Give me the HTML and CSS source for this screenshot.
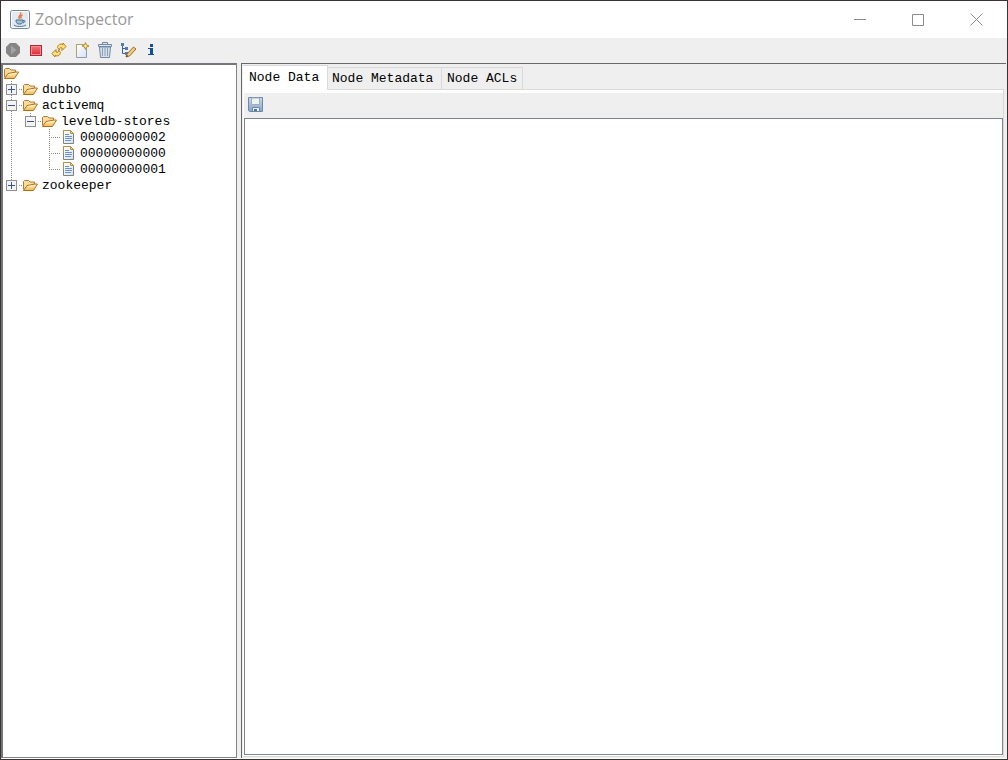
FILE: index.html
```html
<!DOCTYPE html>
<html lang="en">
<head>
<meta charset="utf-8">
<title>ZooInspector</title>
<link rel="stylesheet" href="styles.css">
</head>
<body>
<svg class="defs" aria-hidden="true">
  <defs>
    <linearGradient id="gold" x1="0" y1="0" x2="0" y2="1"><stop offset="0" stop-color="#fff0bd"/><stop offset="1" stop-color="#f1b858"/></linearGradient>
    <linearGradient id="sheet" x1="0" y1="0" x2="1" y2="1"><stop offset="0" stop-color="#fff"/><stop offset="1" stop-color="#d5e2f5"/></linearGradient>
    <linearGradient id="metal" x1="0" y1="0" x2="0" y2="1"><stop offset="0" stop-color="#ccd8e6"/><stop offset="1" stop-color="#86a3cc"/></linearGradient>
    <linearGradient id="red" x1="0" y1="0" x2="0" y2="1"><stop offset="0" stop-color="#f27d80"/><stop offset="1" stop-color="#dc2230"/></linearGradient>
    <symbol id="folder" viewBox="0 0 17 16">
      <path d="M1.500 12.500v-8l1-1h4l1.500 1.500h4.500v2.500" fill="#f9dda0" stroke="#b07a35"/>
      <path d="M1.500 13.500L5 8.500l8-1.500h2.500L11.500 13.500z" fill="url(#gold)" stroke="#b07020"/>
      <path d="M6 9.500l7.500-1" stroke="#fff4c8" fill="none"/>
    </symbol>
    <symbol id="file" viewBox="0 0 17 16">
      <path d="M3.500 1.500h7l3 3v10h-10z" fill="url(#sheet)" stroke="#7f8577"/>
      <path d="M3.500 8V1.500h7l3 3" fill="none" stroke="#b8923c"/>
      <path d="M10.500 1.500v3h3z" fill="#e8c883" stroke="#b8923c"/>
      <path d="M5 5.500h4M5 7.500h7M5 9.500h7M5 11.500h6" stroke="#6f90ca"/>
    </symbol>
    <symbol id="box" viewBox="0 0 19 16">
      <path d="M16 8.500h3" stroke="#888" stroke-dasharray="1 1"/>
      <rect x="3.500" y="3.500" width="10" height="10" fill="#f4f4f4" stroke="#919191"/>
      <path d="M5 8.500h7" stroke="#35539b"/>
    </symbol>
  </defs>
</svg>

<div class="window">
  <header class="titlebar">
    <svg class="app-icon" viewBox="0 0 20 20" aria-hidden="true">
      <rect x=".5" y=".5" width="19" height="18" rx="2" fill="#e3e9ef" stroke="#758596"/>
      <rect x="1.500" y="1.500" width="17" height="16" rx="1" fill="none" stroke="#fff"/>
      <path d="M10.500 2.500c2 2-3.500 3.500-1 6.500M12.500 5c-2.500 1-2 2-1 3.500" fill="none" stroke="#e17a45" stroke-width="1.500"/>
      <path d="M6 10h7c0 2-.5 3.500-2 4H8c-1.500-.5-2-2-2-4zM13 10.500c3-.5 2 2 0 2.500" fill="#a5bed4" stroke="#46739b"/>
      <path d="M4 15c2 2 9 2 12 0" fill="none" stroke="#46739b"/>
    </svg>
    <h1 class="title">ZooInspector</h1>
    <div class="controls">
      <button class="control" aria-label="Minimize"><svg viewBox="0 0 13 13"><path d="M0 6.500h12"/></svg></button>
      <button class="control" aria-label="Maximize"><svg viewBox="0 0 13 13"><path d="M.5 1.500h11v11H.5z"/></svg></button>
      <button class="control" aria-label="Close"><svg viewBox="0 0 13 13"><path d="M.5 .5l12 12M12.500 .5l-12 12"/></svg></button>
    </div>
  </header>

  <div class="toolbar" role="toolbar" aria-label="Main">
    <button class="tool" aria-label="Connect"><svg viewBox="0 0 16 16"><path d="M5 1h6l4 4v6l-4 4H5l-4-4V5z" fill="#858585"/><path d="M6 3.500v9l5.500-4.500z" fill="#a3a3a3"/></svg></button>
    <button class="tool" aria-label="Disconnect"><svg viewBox="0 0 16 16"><rect x="2.500" y="3.500" width="11" height="10" fill="url(#red)" stroke="#ad2a35"/><rect x="3.500" y="4.500" width="9" height="8" fill="none" stroke="#f08a8e"/></svg></button>
    <button class="tool" aria-label="Refresh"><svg viewBox="0 0 16 16"><path d="M6.500 5.500C7 2.500 9 1.500 12 2.500V1l3 3.500-4 4V6C9 5 8.500 6 8.500 8zM9.500 10.500C9 13.500 7 14.500 4 13.500V15l-3-3.500 4-4V10c2 1 2.500 0 2.500-2z" fill="#ffe17e" stroke="#b77a18"/></svg></button>
    <button class="tool" aria-label="Add node"><svg viewBox="0 0 16 16"><path d="M2.500 2.500h7l3 4v9h-10z" fill="url(#sheet)" stroke="#8c9bb0"/><path d="M2.500 15V2.500H9" fill="none" stroke="#b3a16c"/><path d="M11.500 .5l1 2.500 2.500 1-2.500 1-1 2.500-1-2.500L8 4l2.500-1z" fill="#fff0a0" stroke="#b48c28"/></svg></button>
    <button class="tool" aria-label="Delete node"><svg viewBox="0 0 16 16"><path d="M5.500 2V.5h5V2M1.500 2.500h13v2h-13z" fill="#dfe7ef" stroke="#7189a2"/><path d="M2.500 5h11l-1 10.500h-9z" fill="#d6e0ea" stroke="#7189a2"/><path d="M5.500 6v8M8 6v8M10.500 6v8" stroke="#8aa0b6"/></svg></button>
    <button class="tool" aria-label="Edit node viewers"><svg viewBox="0 0 16 16"><path d="M2.500 3v8.500h4M2.500 6.500h4" fill="none" stroke="#405f91"/><path d="M1 1h3v3H1zM5 5h3v3H5zM5 10h3v3H5z" fill="#507ab4"/><path d="M6 15l1-3 6.500-7L16 7l-6.500 7z" fill="#f3cb7b" stroke="#996a32"/><path d="M6 15l1-2 1 1z" fill="#333"/></svg></button>
    <button class="tool" aria-label="About"><svg viewBox="0 0 16 16"><path d="M7 2h3v3H7zM5 6h5v6h1v1H5v-1h2V7H5z" fill="#104f94"/></svg></button>
  </div>

  <main class="split">
    <nav class="tree" aria-label="Nodes">
      <div class="row"><svg class="icon"><use href="#folder"/></svg></div>
      <div class="row">
        <button class="cell" aria-label="Expand dubbo"><svg viewBox="0 0 19 16"><path class="dots" d="M8.500 0v16"/><use href="#box"/><path class="plus" d="M8.500 5v7"/></svg></button>
        <svg class="icon"><use href="#folder"/></svg><span class="label">dubbo</span>
      </div>
      <div class="row">
        <button class="cell" aria-label="Collapse activemq"><svg viewBox="0 0 19 16"><path class="dots" d="M8.500 0v16"/><use href="#box"/></svg></button>
        <svg class="icon"><use href="#folder"/></svg><span class="label">activemq</span>
      </div>
      <div class="row">
        <svg class="cell" viewBox="0 0 19 16"><path class="dots" d="M8.500 0v16"/></svg>
        <button class="cell" aria-label="Collapse leveldb-stores"><svg viewBox="0 0 19 16"><path class="dots" d="M8.500 0v8"/><use href="#box"/></svg></button>
        <svg class="icon"><use href="#folder"/></svg><span class="label">leveldb-stores</span>
      </div>
      <div class="row">
        <svg class="cell" viewBox="0 0 19 16"><path class="dots" d="M8.500 0v16"/></svg>
        <svg class="cell"></svg>
        <svg class="cell" viewBox="0 0 19 16"><path class="dots" d="M8.500 0v16M8 8.500h11"/></svg>
        <svg class="icon"><use href="#file"/></svg><span class="label">00000000002</span>
      </div>
      <div class="row">
        <svg class="cell" viewBox="0 0 19 16"><path class="dots" d="M8.500 0v16"/></svg>
        <svg class="cell"></svg>
        <svg class="cell" viewBox="0 0 19 16"><path class="dots" d="M8.500 0v16M8 8.500h11"/></svg>
        <svg class="icon"><use href="#file"/></svg><span class="label">00000000000</span>
      </div>
      <div class="row">
        <svg class="cell" viewBox="0 0 19 16"><path class="dots" d="M8.500 0v16"/></svg>
        <svg class="cell"></svg>
        <svg class="cell" viewBox="0 0 19 16"><path class="dots" d="M8.500 0v8M8 8.500h11"/></svg>
        <svg class="icon"><use href="#file"/></svg><span class="label">00000000001</span>
      </div>
      <div class="row">
        <button class="cell" aria-label="Expand zookeeper"><svg viewBox="0 0 19 16"><path class="dots" d="M8.500 0v8"/><use href="#box"/><path class="plus" d="M8.500 5v7"/></svg></button>
        <svg class="icon"><use href="#folder"/></svg><span class="label">zookeeper</span>
      </div>
    </nav>

    <section class="details">
      <div class="tabs" role="tablist">
        <button class="tab tab-active" role="tab" aria-selected="true">Node Data</button>
        <button class="tab tab-meta" role="tab" aria-selected="false">Node Metadata</button>
        <button class="tab tab-acls" role="tab" aria-selected="false">Node ACLs</button>
        <span class="tab-rest"></span>
      </div>
      <div class="panel">
        <div class="panel-bar">
          <button class="tool" aria-label="Save"><svg viewBox="0 0 16 16"><path d="M.5 .5h14v14h-13l-1-1z" fill="url(#metal)" stroke="#6b89ad"/><path d="M3.500 1h8v6.500h-8z" fill="#f1f2e9" stroke="#9aafc4"/><path d="M4.500 14v-3.500h7V14" fill="#eef2f6" stroke="#6a88ac"/><path d="M6 12h3v2H6z" fill="#54779f"/></svg></button>
        </div>
        <textarea class="data" aria-label="Node data"></textarea>
      </div>
    </section>
  </main>
</div>
</body>
</html>
```
FILE: styles.css
```css
* { box-sizing: border-box; }

body {
  margin: 0;
  background: #efefef;
  color: #000;
  font: 13px/16px "Liberation Mono", monospace;
}

button {
  margin: 0;
  padding: 0;
  border: 0;
  background: none;
  color: inherit;
  font: inherit;
}

svg { display: block; }

.defs { position: absolute; width: 0; height: 0; }

.window {
  display: flex;
  flex-direction: column;
  height: 100vh;
  border: 1px solid #3b3231;
  background: #efefef;
}

.titlebar {
  display: flex;
  align-items: center;
  height: 37px;
  padding: 0 2px 0 9px;
  background: #fff;
}

.app-icon { width: 20px; height: 20px; }

.title {
  flex: 1;
  margin: 0;
  padding: 0 0 2px 5px;
  color: #999;
  font: 400 16px/24px "Open Sans", sans-serif;
}

.controls { display: flex; }

.control {
  display: flex;
  align-items: center;
  justify-content: center;
  width: 58px;
  height: 36px;
  padding-bottom: 1px;
}

.control svg { width: 13px; height: 13px; fill: none; stroke: #8c8c8c; }

.toolbar {
  display: flex;
  gap: 7px;
  height: 25px;
  padding: 4px;
}

.tool, .tool svg { width: 16px; height: 16px; }

.split {
  display: flex;
  flex: 1;
  min-height: 0;
  padding-right: 1px;
  border-bottom: 1px solid #fff;
}

.tree {
  width: 236px;
  border: 1px solid #7f858a;
  border-top: 2px solid #75757b;
  border-left: 2px solid #75757b;
  background: #fff;
}

.row { display: flex; height: 16px; }

.cell, .cell svg { flex: none; width: 19px; height: 16px; }

.icon { flex: none; width: 17px; height: 16px; }

.label { padding-left: 3px; line-height: 18px; white-space: nowrap; }

.dots { fill: none; stroke: #8a8a8a; stroke-dasharray: 1 1; }

.plus { stroke: #35539b; }

.details {
  display: flex;
  flex: 1;
  flex-direction: column;
  min-width: 0;
  margin-left: 4px;
  padding: 1px 2px 1px 1px;
  border-top: 1px solid #696969;
  border-left: 1px solid #696969;
}

.tabs { display: flex; align-items: flex-end; height: 25px; }

.tab {
  height: 23px;
  padding: 1px 4px 0;
  border: 1px solid #d9d9d9;
  border-left: 0;
  text-align: left;
  white-space: nowrap;
}

.tab-active {
  width: 85px;
  height: 25px;
  padding: 0 6px;
  border-bottom: 0;
  background: #fff;
}

.tab-meta { width: 114px; }

.tab-acls { width: 81px; padding-left: 5px; }

.tab-rest { flex: 1; border-bottom: 1px solid #d9d9d9; }

.panel {
  display: flex;
  flex: 1;
  flex-direction: column;
  min-height: 0;
  padding: 3px 0 1px 1px;
  border: solid #d9d9d9;
  border-width: 0 1px 1px 0;
  background: #fff;
}

.panel-bar { height: 25px; padding: 4px; background: #efefef; }

.data {
  flex: 1;
  width: 100%;
  min-height: 0;
  border: 1px solid #7f858a;
  outline: 0;
  background: #fff;
  resize: none;
}
```
